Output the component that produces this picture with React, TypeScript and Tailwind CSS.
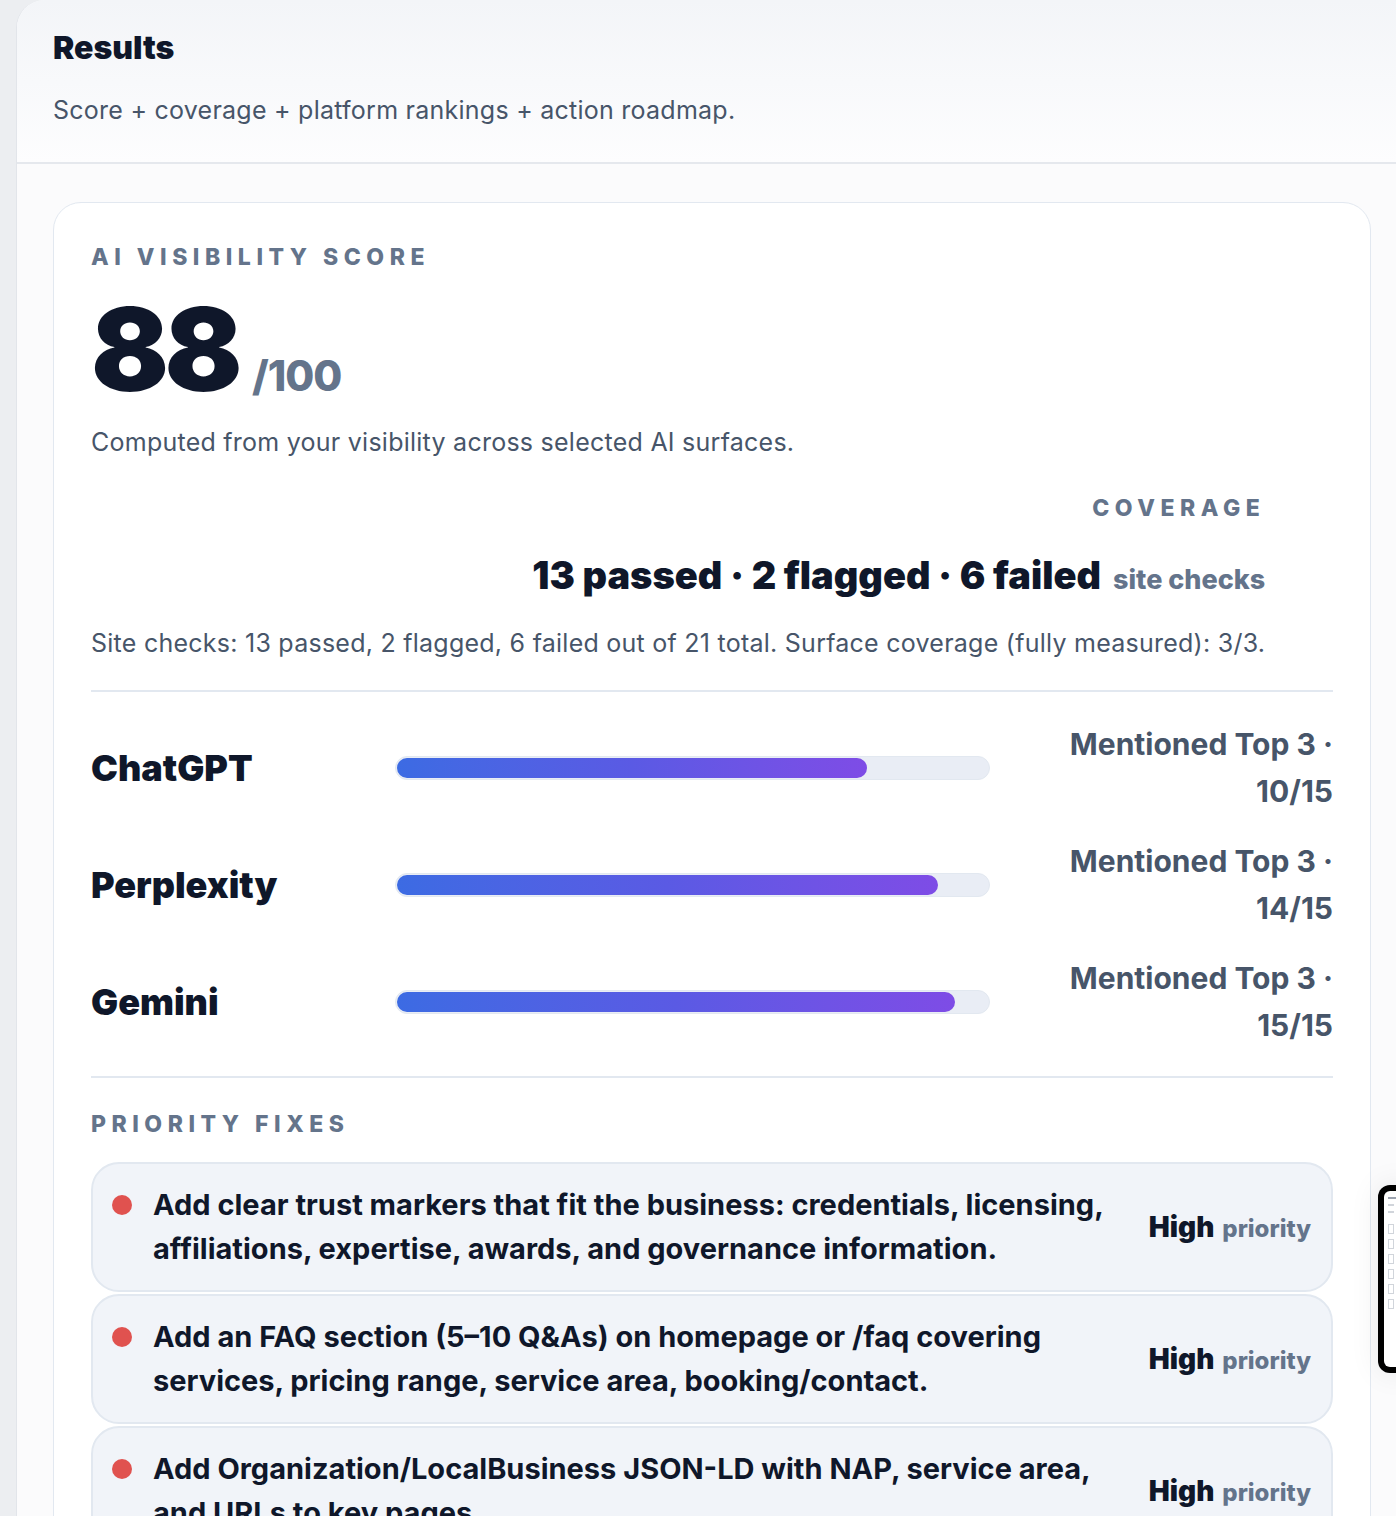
import React from 'react';

const platforms = [
  { name: 'ChatGPT', pct: 79.5, detail: 'Mentioned Top 3 · 10/15' },
  { name: 'Perplexity', pct: 91.5, detail: 'Mentioned Top 3 · 14/15' },
  { name: 'Gemini', pct: 94.5, detail: 'Mentioned Top 3 · 15/15' },
];

const fixes = [
  'Add clear trust markers that fit the business: credentials, licensing, affiliations, expertise, awards, and governance information.',
  'Add an FAQ section (5–10 Q&As) on homepage or /faq covering services, pricing range, service area, booking/contact.',
  'Add Organization/LocalBusiness JSON-LD with NAP, service area, and URLs to key pages.',
];

function Label({ children }: { children: React.ReactNode }) {
  return (
    <div className="text-[23px] font-extrabold uppercase leading-[30px] tracking-[0.24em] text-[#64748b]">
      {children}
    </div>
  );
}

export default function App() {
  return (
    <div className="relative h-[1516px] overflow-hidden bg-[#eceef1] font-['Inter',sans-serif] text-[#0f172a]">
      <div className="ml-4 min-h-full rounded-tl-[28px] border-l border-[#e2e5ea] bg-[#fbfbfc]">
        {/* Header */}
        <header className="rounded-tl-[28px] border-b-2 border-[#e5e8ed] bg-gradient-to-b from-[#f3f5f8] to-[#fdfdfe] pl-[36px] pt-[26px] pb-[36px]">
          <h1 className="text-[32px] font-black leading-[44px]">Results</h1>
          <p className="mt-[24px] text-[25px] leading-[32px] tracking-[0.01em] text-[#475569]">
            Score + coverage + platform rankings + action roadmap.
          </p>
        </header>

        {/* Card */}
        <div className="pl-[36px] pr-[25px] pt-[38px]">
          <div className="rounded-t-[28px] border border-[#e2e8f0] bg-white px-[37px] pt-[39px]">
            <Label>AI Visibility Score</Label>
            <div className="mt-[20px] flex items-baseline gap-[14px]">
              <span className="text-[115px] font-black leading-[115px] tracking-[-0.04em]">88</span>
              <span className="text-[42px] font-extrabold tracking-tight text-[#64748b]">/100</span>
            </div>
            <p className="mt-[19px] text-[25px] leading-[32px] tracking-[0.01em] text-[#475569]">
              Computed from your visibility across selected AI surfaces.
            </p>

            <div className="mt-[35px] w-fit">
              <div className="text-right">
                <Label>Coverage</Label>
              </div>
              <div className="mt-[30px] text-right leading-[44px]">
                <span className="text-[38px] font-black">13 passed · 2 flagged · 6 failed</span>
                <span className="ml-3 text-[27px] font-extrabold text-[#64748b]">site checks</span>
              </div>
              <p className="mt-[22px] text-[25px] leading-[32px] tracking-[0.01em] text-[#475569]">
                Site checks: 13 passed, 2 flagged, 6 failed out of 21 total. Surface coverage (fully measured): 3/3.
              </p>
            </div>

            <div className="mt-[31px] border-t-2 border-[#e2e8f0]" />

            {/* Platform rankings */}
            <div className="flex flex-col gap-[23px] pt-[29px] pb-[27px]">
              {platforms.map((p) => (
                <div key={p.name} className="flex items-center">
                  <div className="w-[304px] text-[36px] font-black">{p.name}</div>
                  <div className="h-[24px] w-[595px] rounded-full border border-[#e2e8f0] bg-[#e9edf5] p-px">
                    <div
                      className="h-full rounded-full bg-gradient-to-r from-[#3c6be3] via-[#5a5ae4] to-[#7e4ce6]"
                      style={{ width: `${p.pct}%` }}
                    />
                  </div>
                  <div className="flex-1 pl-[40px] text-right text-[30px] font-bold leading-[47px] text-[#475569]">
                    {p.detail}
                  </div>
                </div>
              ))}
            </div>

            <div className="border-t-2 border-[#e2e8f0]" />

            {/* Priority fixes */}
            <div className="pt-[31px]">
              <Label>Priority fixes</Label>
              <div className="mt-[23px] flex flex-col gap-[2px]">
                {fixes.map((f) => (
                  <div
                    key={f}
                    className="flex items-center gap-[20px] rounded-[28px] border-2 border-[#e2e8f0] bg-[#f1f4f9] py-[19px] pl-[19px] pr-[20px]"
                  >
                    <div className="flex flex-1 items-start gap-[21px]">
                      <span className="mt-[12px] h-[20px] w-[20px] shrink-0 rounded-full bg-[#e0524f]" />
                      <p className="text-[29px] font-bold leading-[44px]">{f}</p>
                    </div>
                    <div className="shrink-0 whitespace-nowrap">
                      <span className="text-[28px] font-black">High</span>
                      <span className="ml-2 text-[24px] font-extrabold text-[#64748b]">priority</span>
                    </div>
                  </div>
                ))}
              </div>
            </div>
          </div>
        </div>
      </div>

      {/* Floating preview thumbnail */}
      <div className="absolute left-[1378px] top-[1185px] h-[188px] w-[40px] rounded-[12px] bg-black p-[6px] shadow-[0_0_30px_rgba(0,0,0,0.08)]">
        <div className="flex h-full flex-col gap-[5px] rounded-[6px] bg-white p-[4px] pt-[6px]">
          <div className="h-[2px] w-[8px] bg-[#9ca3af]" />
          <div className="h-[2px] w-[6px] bg-[#d1d5db]" />
          <div className="h-[2px] w-[6px] bg-[#d1d5db]" />
          <div className="mt-[6px] h-[10px] w-[6px] border border-[#d1d5db]" />
          <div className="h-[10px] w-[6px] border border-[#d1d5db]" />
          <div className="h-[10px] w-[6px] border border-[#d1d5db]" />
          <div className="h-[10px] w-[6px] border border-[#d1d5db]" />
          <div className="h-[10px] w-[6px] border border-[#d1d5db]" />
          <div className="h-[10px] w-[6px] border border-[#d1d5db]" />
        </div>
      </div>
    </div>
  );
}
